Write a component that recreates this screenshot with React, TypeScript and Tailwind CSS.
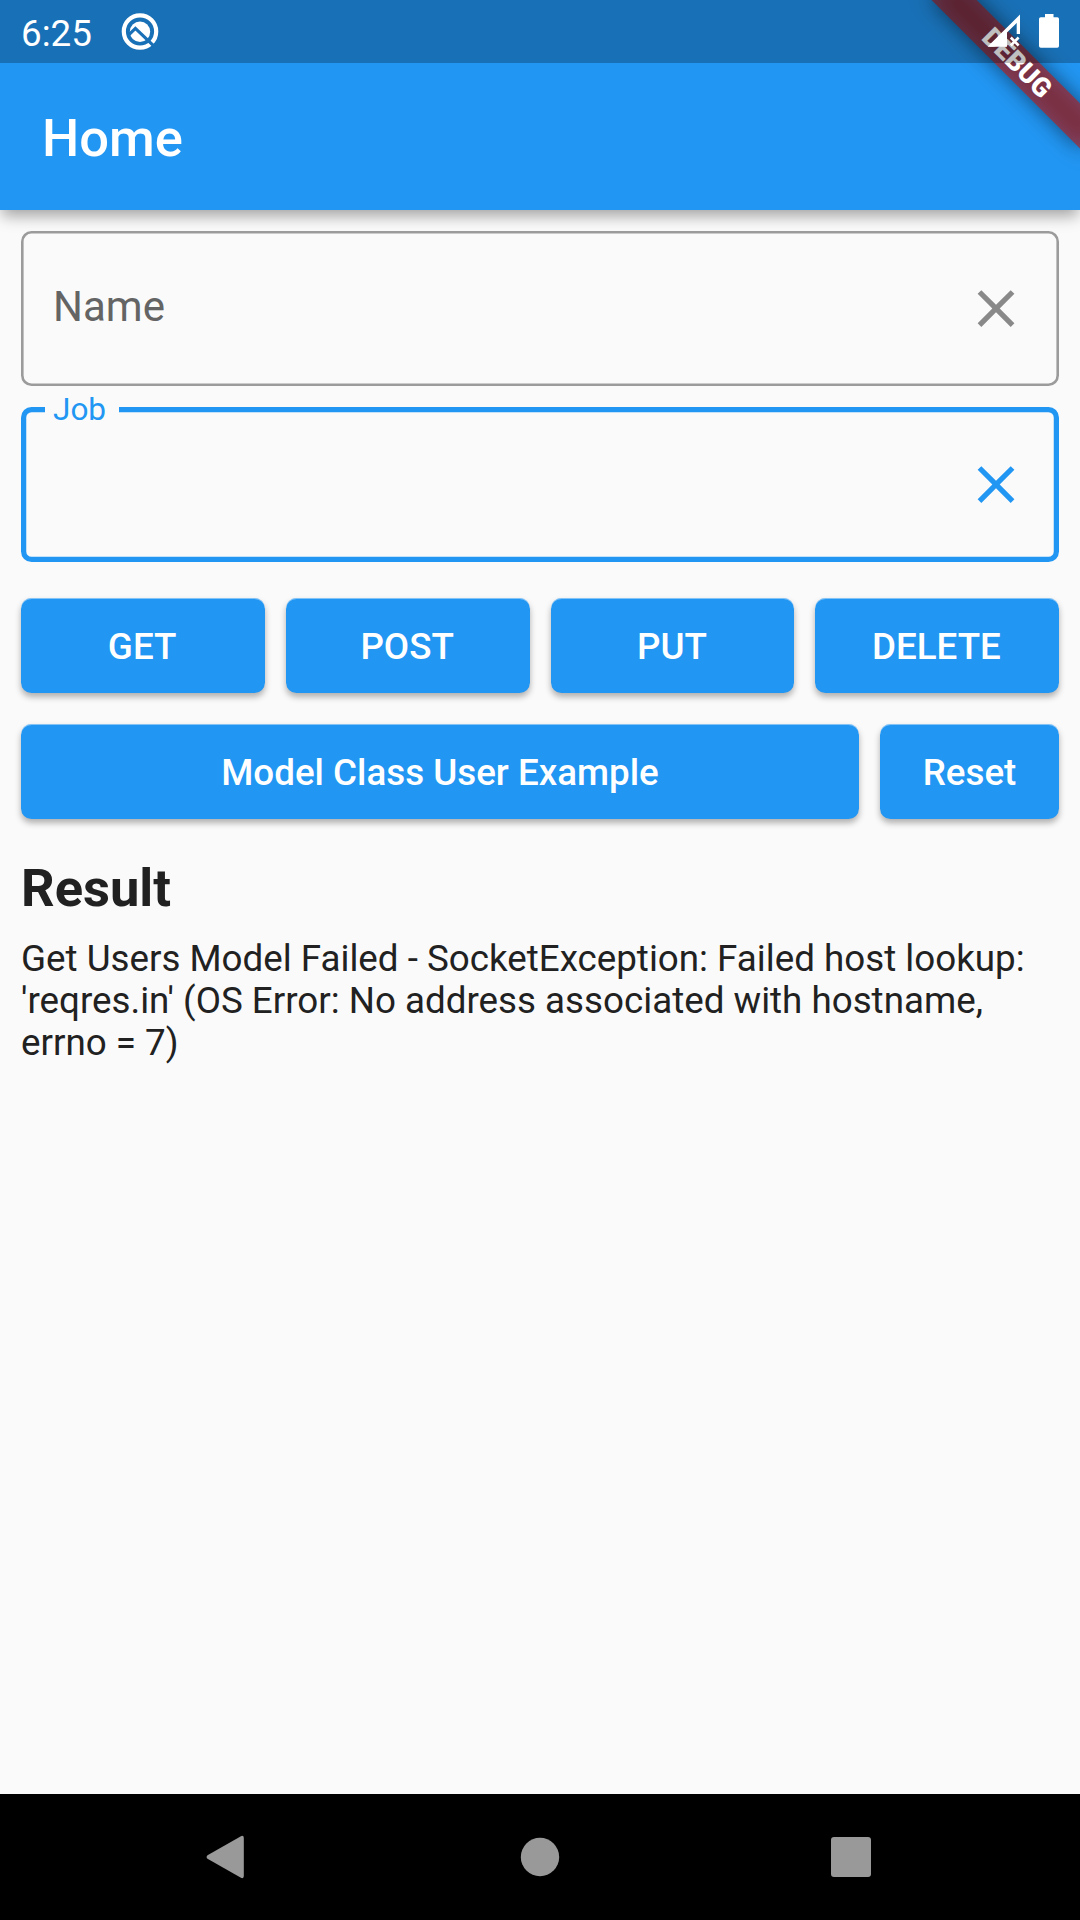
import type { ReactNode } from "react";

function AndroidQIcon() {
  return (
    <svg className="h-[63px] w-[40px]" viewBox="120 0 40 63" fill="none">
      <circle cx="140" cy="31.5" r="16.2" stroke="#fff" strokeWidth="4.2" />
      <circle cx="140" cy="31.7" r="10.2" fill="#fff" />
      <path d="M129 34.6 L135.4 28.4 L154 46.2" stroke="#1a70b6" strokeWidth="3.2" />
    </svg>
  );
}

function StatusBar() {
  return (
    <div className="absolute inset-x-0 top-0 z-20 flex h-[63px] items-center bg-black/25 text-white">
      <span className="ml-[21px] w-[99px] pt-[5px] text-[36.75px] leading-none">6:25</span>
      <AndroidQIcon />
      <svg className="ml-auto mr-[19px] h-[63px] w-[33px]" viewBox="987 0 33 63">
        <path
          fill="#fff"
          d="M987.5 46.7 L1020 14.5 V34 H1016.7 V23 L1007 32.5 V46.7 Z"
        />
        <path d="M1010.8 37.5 L1018.6 45.5 M1018.6 37.5 L1010.8 45.5" stroke="#fff" strokeWidth="2.6" />
      </svg>
      <svg className="mr-[21px] h-[63px] w-[20px]" viewBox="0 0 20 63">
        <path
          fill="#fff"
          d="M6 14 H14.5 V17.3 H18.3 Q20 17.3 20 19 V46 Q20 47.8 18.3 47.8 H1.8 Q0 47.8 0 46 V19 Q0 17.3 1.8 17.3 H6 Z"
        />
      </svg>
    </div>
  );
}

function DebugBanner() {
  return (
    <div className="absolute right-0 top-0 z-10 size-[210px] overflow-hidden">
      <div className="absolute left-[105px] top-[73px] h-[32px] w-[210px] origin-[105px_-73px] rotate-45">
        <div className="absolute inset-0 bg-black/50 blur-[10.4px]" />
        <div className="relative flex h-full items-center justify-center bg-[#b71c1c]/63 text-[26.8px] font-black leading-none text-white">
          DEBUG
        </div>
      </div>
    </div>
  );
}

function ClearIcon() {
  return (
    <svg className="size-[63px]" viewBox="-0.2 0 24 24" fill="currentColor">
      <path d="M19 6.41 17.59 5 12 10.59 6.41 5 5 6.41 10.59 12 5 17.59 6.41 19 12 13.41 17.59 19 19 17.59 13.41 12z" />
    </svg>
  );
}

function Button({ children, className = "" }: { children: ReactNode; className?: string }) {
  return (
    <button
      className={`flex h-[95px] items-center justify-center rounded-[10.5px] bg-[#2196f3] pt-[3px] text-[36.75px] font-medium leading-none text-white shadow-[inset_0_1px_0_rgba(250,250,250,0.45),0_4px_6px_rgba(0,0,0,0.3)] ${className}`}
    >
      {children}
    </button>
  );
}

export default function App() {
  return (
    <div className="relative flex h-[1920px] w-[1080px] flex-col overflow-hidden bg-[#fafafa] font-['Roboto',sans-serif] text-[#212121]">
      <StatusBar />
      <DebugBanner />
      <header className="flex h-[210px] shrink-0 items-center bg-[#2196f3] pl-[42px] pt-[67px] shadow-[0_8px_14px_-2px_rgba(0,0,0,0.35)]">
        <h1 className="text-[52.5px] font-medium leading-none text-white">Home</h1>
      </header>

      <main className="flex grow flex-col px-[21px] pt-[21px]">
        <div className="flex h-[155px] items-center justify-between rounded-[10.5px] pl-[32px] pr-[32px] shadow-[inset_0_0_0_2.6px_#9b9b9b]">
          <span className="pb-[3px] text-[42px] leading-none text-[#646464]">Name</span>
          <span className="text-[#898989]">
            <ClearIcon />
          </span>
        </div>

        <div className="relative mt-[21px] flex h-[155px] items-center justify-end rounded-[10.5px] pr-[32px] text-[#2196f3] shadow-[inset_0_0_0_5.25px_#2196f3]">
          <span className="absolute left-[24px] top-[-15px] w-[74px] bg-[#fafafa] pl-[8px] text-[31.5px] leading-[36px]">
            Job
          </span>
          <ClearIcon />
        </div>

        <div className="mt-[36px] grid grid-cols-4 gap-[21px]">
          <Button className="pr-[1.5px]">GET</Button>
          <Button className="pr-px">POST</Button>
          <Button className="pr-px">PUT</Button>
          <Button className="pr-[1.5px]">DELETE</Button>
        </div>
        <div className="mt-[31px] flex gap-[21px]">
          <Button className="grow">Model Class User Example</Button>
          <Button className="w-[179px]">Reset</Button>
        </div>

        <h2 className="mt-[43px] text-[52.5px] font-bold leading-[53px]">Result</h2>
        <p className="mt-[23px] text-[36.75px] leading-[42px]">
          Get Users Model Failed - SocketException: Failed host lookup: 'reqres.in' (OS Error: No address
          associated with hostname, errno = 7)
        </p>
      </main>

      <nav className="flex h-[126px] shrink-0 items-center bg-black">
        <svg className="h-[126px] w-[1080px]" viewBox="0 0 1080 126" fill="#999">
          <path d="M207.5 61.2 L240.5 42.4 Q243.8 40.8 243.8 44 V82 Q243.8 85.2 240.5 83.6 L207.5 64.8 Q205.6 63 207.5 61.2 Z" />
          <circle cx="540" cy="63" r="19.2" />
          <rect x="831" y="43" width="40" height="40" rx="3" />
        </svg>
      </nav>
    </div>
  );
}
